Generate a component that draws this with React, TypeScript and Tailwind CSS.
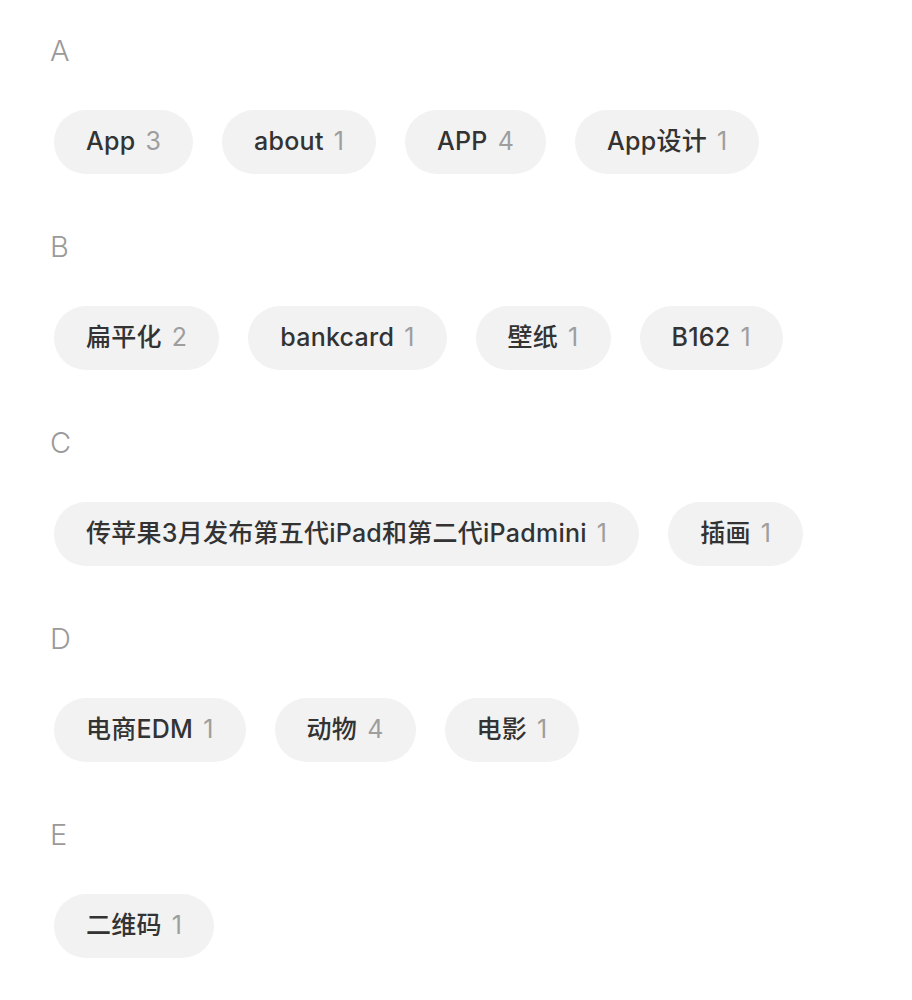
const groups: { letter: string; tags: { name: string; count: number }[] }[] = [
  {
    letter: "A",
    tags: [
      { name: "App", count: 3 },
      { name: "about", count: 1 },
      { name: "APP", count: 4 },
      { name: "App设计", count: 1 },
    ],
  },
  {
    letter: "B",
    tags: [
      { name: "扁平化", count: 2 },
      { name: "bankcard", count: 1 },
      { name: "壁纸", count: 1 },
      { name: "B162", count: 1 },
    ],
  },
  {
    letter: "C",
    tags: [
      { name: "传苹果3月发布第五代iPad和第二代iPadmini", count: 1 },
      { name: "插画", count: 1 },
    ],
  },
  {
    letter: "D",
    tags: [
      { name: "电商EDM", count: 1 },
      { name: "动物", count: 4 },
      { name: "电影", count: 1 },
    ],
  },
  {
    letter: "E",
    tags: [{ name: "二维码", count: 1 }],
  },
];

export default function App() {
  return (
    <div
      className="min-h-[1000px] bg-white pt-[31px] flex flex-col gap-[53px]"
      style={{ fontFamily: 'Inter, "Noto Sans CJK SC", sans-serif' }}
    >
      {groups.map((group) => (
        <section key={group.letter}>
          <div className="pl-[50px] h-[40px] leading-[40px] text-[29px] font-light text-[#9a9a9a]">
            {group.letter}
          </div>
          <div className="mt-[39px] pl-[54px] flex flex-wrap gap-[29px]">
            {group.tags.map((tag) => (
              <div
                key={tag.name}
                className="h-[64px] rounded-full bg-[#f2f2f2] px-[32px] flex items-center text-[25px] tracking-[0.01em]"
              >
                <span className="text-[#333333] font-medium">{tag.name}</span>
                <span className="ml-[10px] text-[#9e9e9e]">{tag.count}</span>
              </div>
            ))}
          </div>
        </section>
      ))}
    </div>
  );
}
